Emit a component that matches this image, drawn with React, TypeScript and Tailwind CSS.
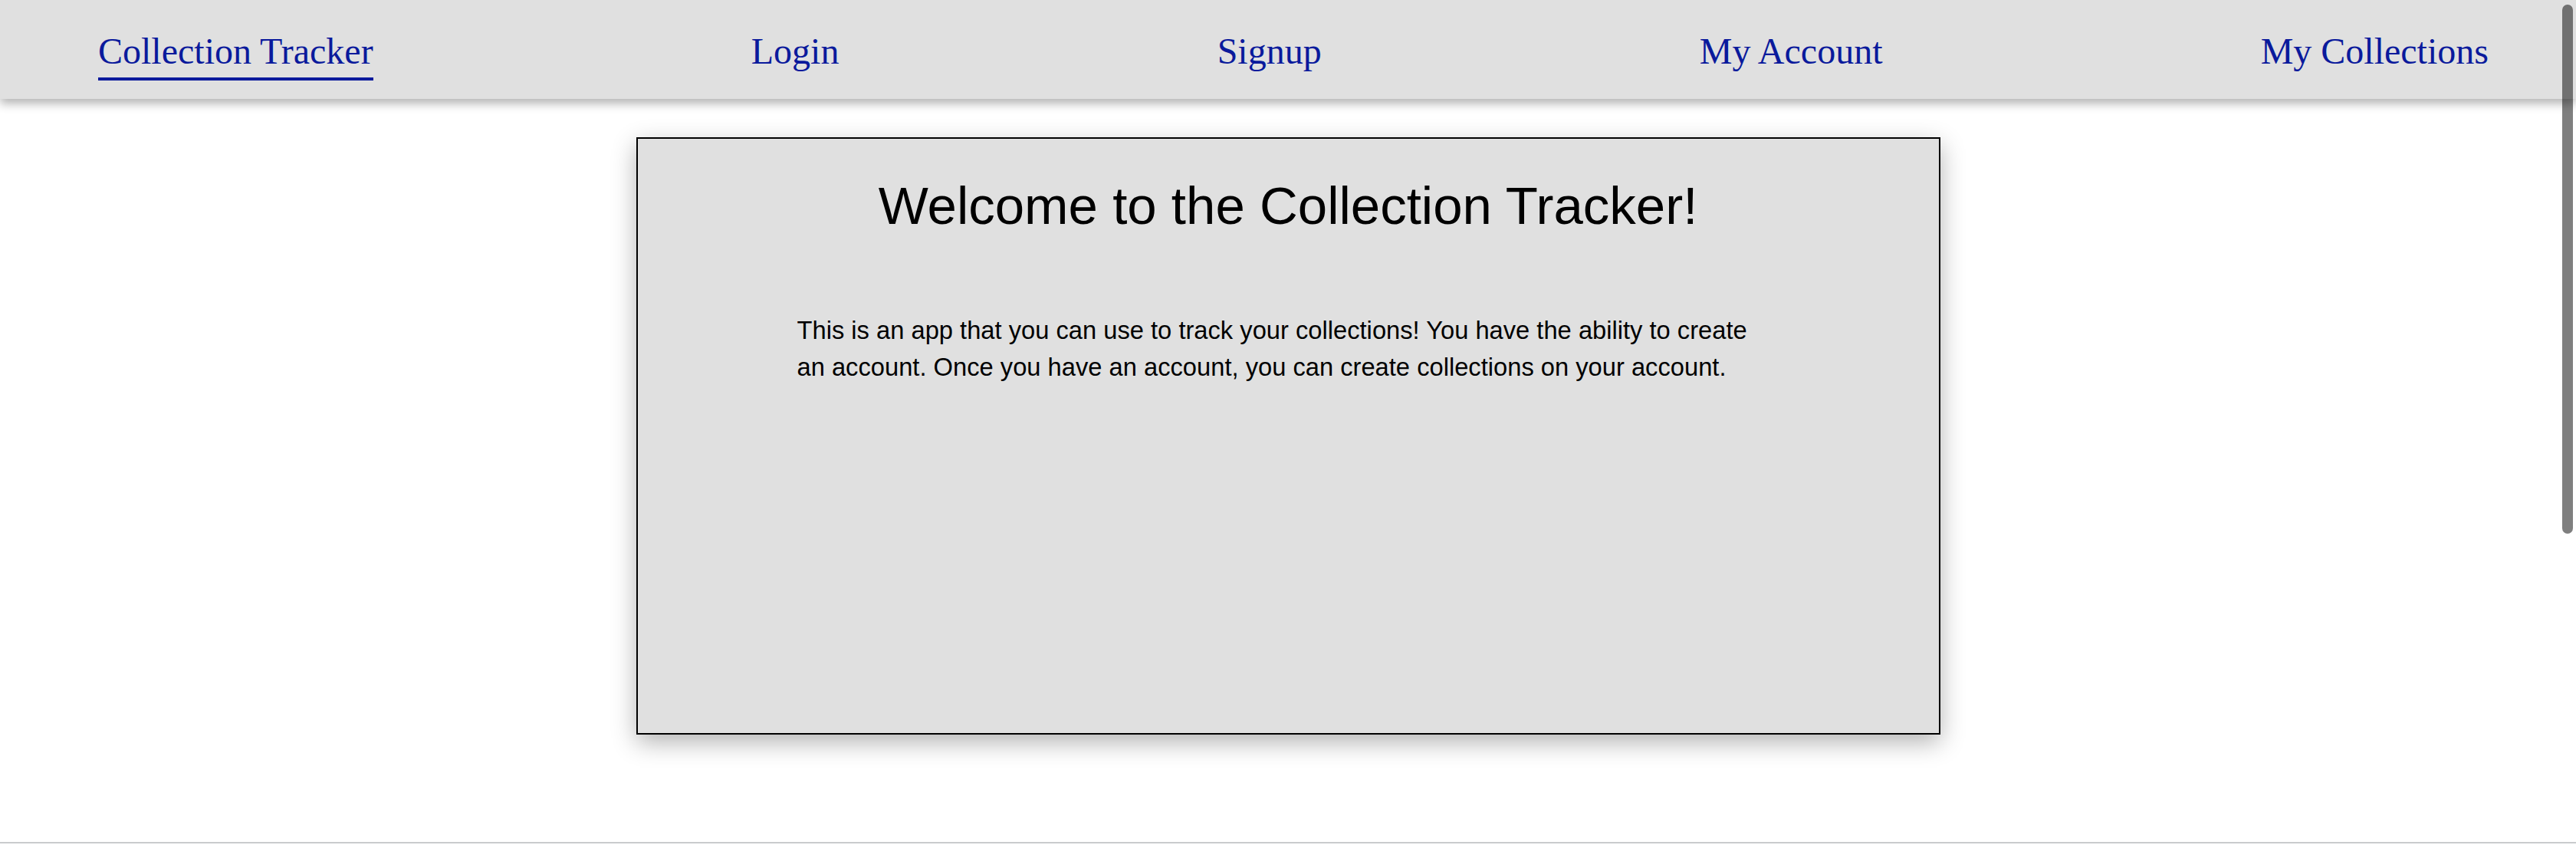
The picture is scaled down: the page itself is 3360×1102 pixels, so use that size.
const NAV_LINKS = [
  { label: 'Collection Tracker', active: true },
  { label: 'Login' },
  { label: 'Signup' },
  { label: 'My Account' },
  { label: 'My Collections' },
];

export default function App() {
  return (
    <div className="relative h-[1102px] overflow-hidden bg-white text-black">
      {/* top nav */}
      <nav
        className="relative z-10 flex h-[129px] items-start justify-between bg-[#e0e0e0] pl-[128px] pr-[114px] pt-[40px] shadow-[0_6px_12px_rgba(0,0,0,0.3)]"
        style={{ fontFamily: '"Liberation Serif", "Times New Roman", serif' }}
      >
        {NAV_LINKS.map((l) => (
          <a
            key={l.label}
            href="#"
            className={
              'block border-b-4 pb-2 text-[48px] leading-[53px] text-[#0a1a9c] ' +
              (l.active ? 'border-[#0a1a9c]' : 'border-transparent')
            }
          >
            {l.label}
          </a>
        ))}
      </nav>

      <main
        className="flex h-[971px] flex-col items-center border-b-2 border-[#c9cbcd] pt-[50px]"
        style={{ fontFamily: '"Liberation Sans", Arial, Helvetica, sans-serif' }}
      >
        <section className="h-[779px] w-[1701px] border-2 border-black bg-[#e0e0e0] pt-[48px] shadow-[0_10px_30px_rgba(0,0,0,0.3)]">
          <h1 className="text-center text-[69px] font-normal leading-[80px]">
            Welcome to the Collection Tracker!
          </h1>
          <p className="ml-[208px] mt-[98px] max-w-[1260px] text-[32.7px] leading-[48px]">
            This is an app that you can use to track your collections! You have the ability to create an
            account. Once you have an account, you can create collections on your account.
          </p>
        </section>
      </main>

      {/* overlay scrollbar thumb */}
      <div className="absolute right-[4px] top-[6px] z-20 h-[690px] w-[14px] rounded-full bg-black/50" />
    </div>
  );
}
